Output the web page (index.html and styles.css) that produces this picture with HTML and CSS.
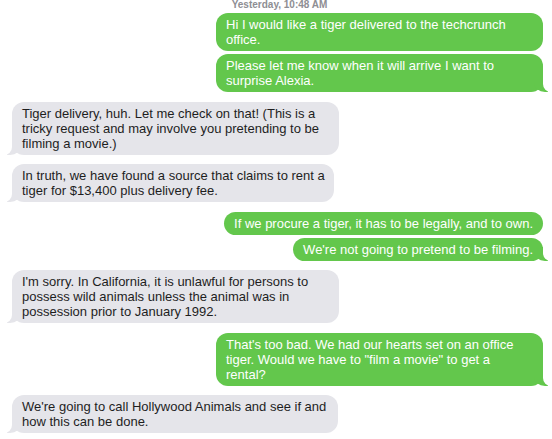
FILE: index.html
```html
<!DOCTYPE html>
<html>
<head>
<meta charset="utf-8">
<link rel="stylesheet" href="styles.css">
</head>
<body>
<div class="chat">
  <div class="stamp">Yesterday, 10:48 AM</div>
  <div class="msg out wide">Hi I would like a tiger delivered to the techcrunch<br>office.</div>
  <div class="msg out wide grouped tail">Please let me know when it will arrive I want to<br>surprise Alexia.</div>
  <div class="msg in wide tail">Tiger delivery, huh. Let me check on that! (This is a<br>tricky request and may involve you pretending to be<br>filming a movie.)</div>
  <div class="msg in w320 tail">In truth, we have found a source that claims to rent a<br>tiger for $13,400 plus delivery fee.</div>
  <div class="msg out">If we procure a tiger, it has to be legally, and to own.</div>
  <div class="msg out grouped tail">We're not going to pretend to be filming.</div>
  <div class="msg in wide tail">I'm sorry. In California, it is unlawful for persons to<br>possess wild animals unless the animal was in<br>possession prior to January 1992.</div>
  <div class="msg out wide tail">That's too bad. We had our hearts set on an office<br>tiger. Would we have to "film a movie" to get a<br>rental?</div>
  <div class="msg in w325 tail">We're going to call Hollywood Animals and see if and<br>how this can be done.</div>
</div>
</body>
</html>
```

FILE: styles.css
```css
html, body {
  margin: 0;
  padding: 0;
  background: #ffffff;
}

.chat {
  width: 552px;
  height: 439px;
  overflow: hidden;
  box-sizing: border-box;
  padding: 0 9px 0 12px;
  display: flex;
  flex-direction: column;
  font-family: "Liberation Sans", Arial, sans-serif;
}

.stamp {
  margin-top: -1px;
  align-self: center;
  font-size: 10px;
  line-height: 11px;
  font-weight: bold;
  color: #8e8e93;
  margin-left: 4px;
}

.msg {
  position: relative;
  box-sizing: border-box;
  max-width: 328px;
  padding: 4px 10px;
  border-radius: 12px;
  font-size: 13px;
  line-height: 15px;
  white-space: nowrap;
  margin-top: 9.5px;
}

.stamp + .msg {
  margin-top: 3px;
}

.msg.grouped {
  margin-top: 3px;
}

.wide {
  width: 327px;
}

.w320 {
  width: 322px;
}

.w325 {
  width: 326px;
}

.out {
  align-self: flex-end;
  background: #63c74c;
  color: #ffffff;
}

.in {
  align-self: flex-start;
  background: #e5e5ea;
  color: #1e1e1e;
}

.tail::before,
.tail::after {
  content: "";
  position: absolute;
  bottom: 0;
  height: 14px;
}

.out.tail::before {
  right: -5px;
  width: 14px;
  background: #63c74c;
  border-bottom-left-radius: 11px 9px;
}

.out.tail::after {
  right: -14px;
  width: 14px;
  background: #ffffff;
  border-bottom-left-radius: 8px;
}

.in.tail::before {
  left: -5px;
  width: 14px;
  background: #e5e5ea;
  border-bottom-right-radius: 11px 9px;
}

.in.tail::after {
  left: -14px;
  width: 14px;
  background: #ffffff;
  border-bottom-right-radius: 8px;
}
```
